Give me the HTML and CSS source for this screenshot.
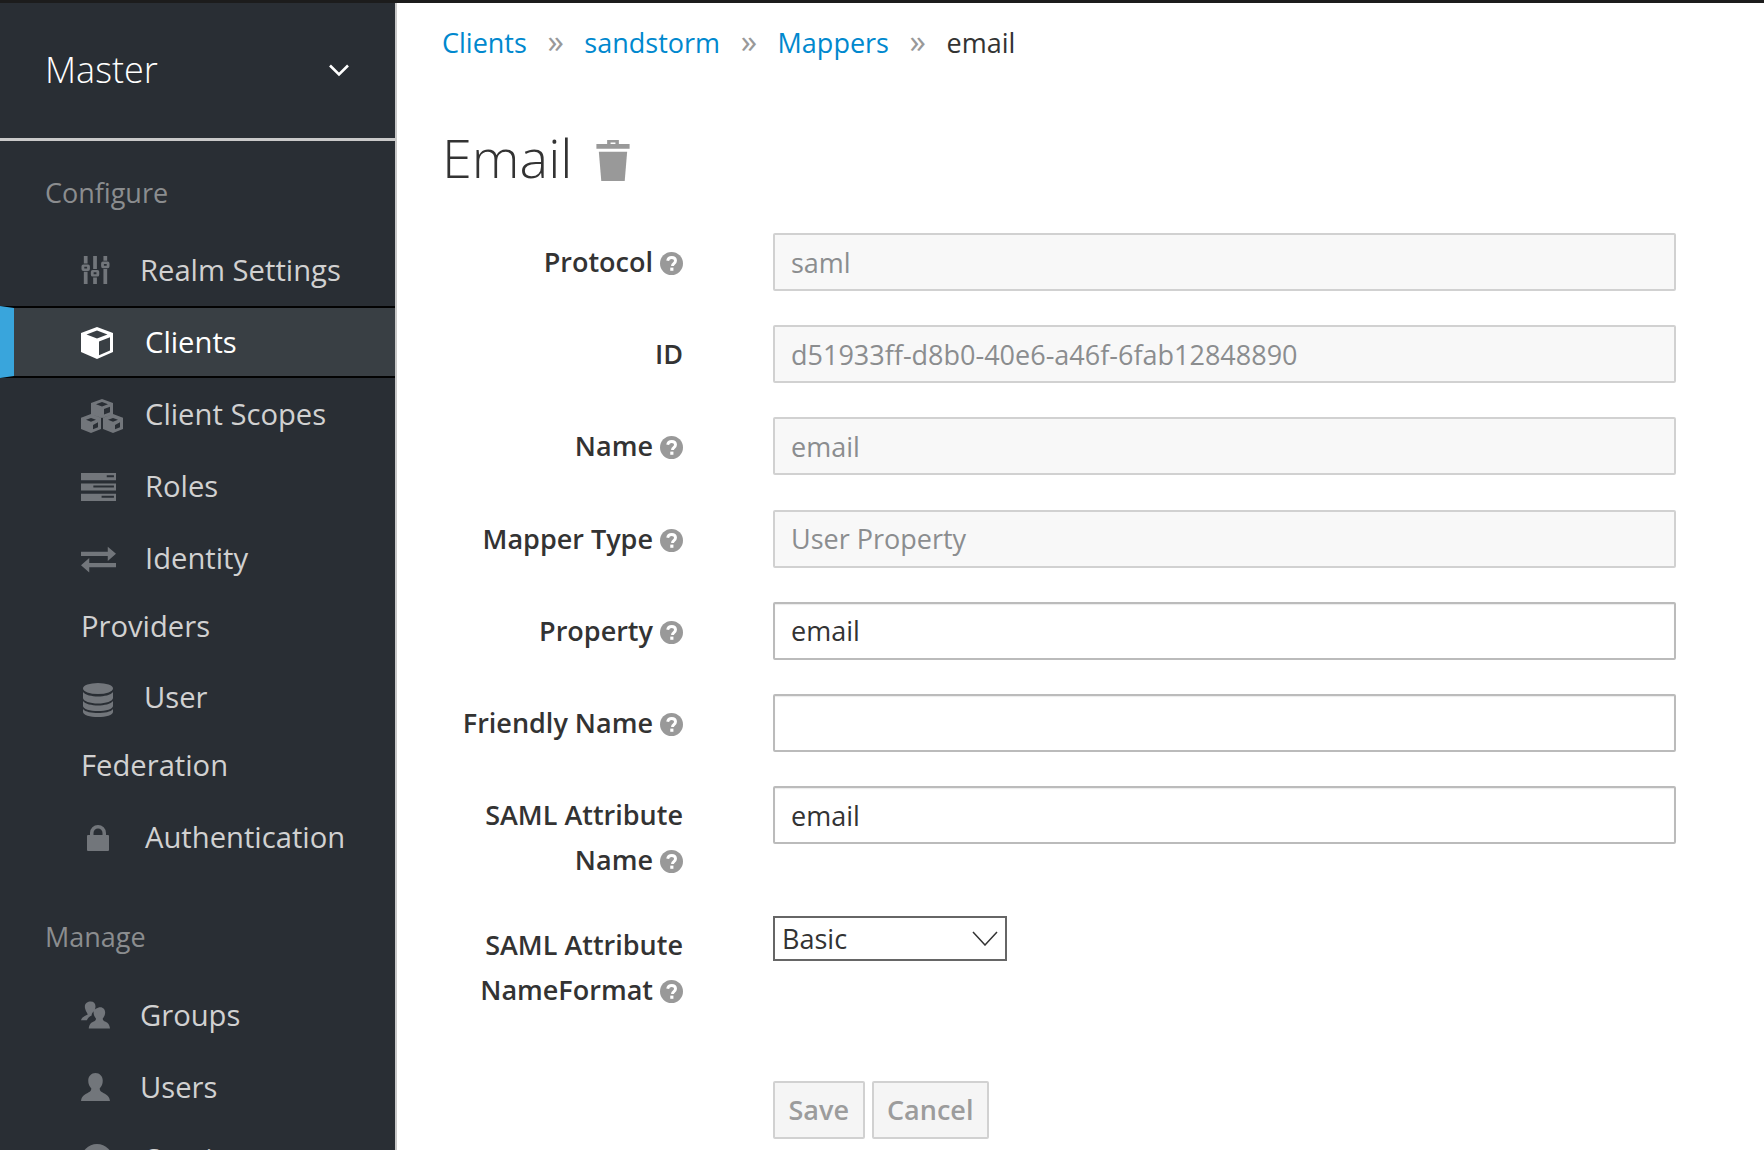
FILE: index.html
```html
<!DOCTYPE html>
<html lang="en">
<head>
  <meta charset="UTF-8">
  <title>Email mapper</title>
  <link rel="stylesheet" href="styles.css">
</head>
<body>
  <svg class="defs" width="0" height="0">
    <symbol id="help" viewBox="0 0 24 24">
      <circle cx="12" cy="12" r="12" fill="#999"/>
      <path d="M8 9.200c.4-2.200 2-3.400 4.200-3.400 2.300 0 4 1.300 4 3.400 0 3-3.200 2.900-3.200 5.300" fill="none" stroke="#fff" stroke-width="3"/>
      <rect x="10.700" y="16.300" width="3.300" height="3.300" fill="#fff"/>
    </symbol>
  </svg>

  <div class="topbar"></div>
  <div class="app">
    <aside class="sidebar">
      <div class="realm">
        <span>Master</span>
        <svg class="chevron" viewBox="0 0 22 14"><path d="M2 2.500 11 11.500 20 2.500" fill="none" stroke="#fff" stroke-width="2.600"/></svg>
      </div>

      <h2 class="nav-title">Configure</h2>
      <ul class="nav">
        <li><a href="#"><svg class="icon icon-narrow" viewBox="0 0 30 30"><path d="M2.500 0h4v8h-4zM12.500 0h4v14h-4zM23.500 0h4v5h-4zM2.500 17h4v13h-4zM12.500 23h4v7h-4zM23.500 14h4v16h-4z"/><path d="M2 9h5a2 2 0 0 1 2 2v3a2 2 0 0 1-2 2H2a2 2 0 0 1-2-2v-3a2 2 0 0 1 2-2zm1 2.500v2h3v-2zM12 15h5a2 2 0 0 1 2 2v3a2 2 0 0 1-2 2h-5a2 2 0 0 1-2-2v-3a2 2 0 0 1 2-2zm1 2.500v2h3v-2zM23 6h5a2 2 0 0 1 2 2v3a2 2 0 0 1-2 2h-5a2 2 0 0 1-2-2V8a2 2 0 0 1 2-2zm1 2.500v2h3v-2z" fill-rule="evenodd"/></svg>Realm Settings</a></li>
        <li class="active"><a href="#"><svg class="icon" viewBox="0 0 32 32"><path d="M16 0 32 6v19L16 32 0 25V6zM16 3.500 5.500 7.500 16 11.500 26.500 7.500zM18 14.500v13.800l11-4.800V10.300z" fill-rule="evenodd" fill="#fff"/></svg>Clients</a></li>
        <li><a href="#"><svg class="icon icon-cubes" viewBox="0 0 42 34"><path d="M21 0 32 4v11l-11 4-11-4V4zM21 3 15 5.200 21 7.500 27 5.200zM23 10v5.500l6-2.300V7.700zM10 15l10 3.800V30l-10 4-10-4V18.800zM10 19l-5 1.800 5 2 5-2zM12 26v4.300l5-2v-5zM32 15l10 3.800V30l-10 4-10-4V18.800zM32 19l-5 1.800 5 2 5-2zM34 26v4.300l5-2v-5z" fill-rule="evenodd"/></svg>Client Scopes</a></li>
        <li><a href="#"><svg class="icon icon-wide" viewBox="0 0 34 27"><path d="M0 0h34v7H0zm25 2v2h7V2zM0 10h34v7H0zm12 2v2h20v-2zM0 20h34v7H0zm20 2v2h12v-2z" fill-rule="evenodd"/></svg>Roles</a></li>
        <li><a href="#"><svg class="icon icon-wide" viewBox="0 0 34 26"><path d="M0 6h26V1l8 7-8 7v-5H0zM8 12v5h26v4H8v5l-8-7z"/></svg>Identity Providers</a></li>
        <li class="short"><a href="#"><svg class="icon icon-db" viewBox="0 0 30 34"><ellipse cx="15" cy="5.500" rx="15" ry="5.500"/><path d="M0 9c2 3 9 4.500 15 4.500S28 12 30 9v6c0 3-7 5.500-15 5.500S0 18 0 15zM0 18c2 3 9 4.500 15 4.500S28 21 30 18v5c0 3-7 5-15 5S0 26 0 23zM0 26c2 3 9 4 15 4s13-1 15-4v3c0 3-7 5-15 5S0 32 0 29z"/></svg>User Federation</a></li>
        <li><a href="#"><svg class="icon icon-lock" viewBox="0 0 22 27"><path d="M3 11V9a8 8 0 0 1 16 0v2h2a1 1 0 0 1 1 1v14a1 1 0 0 1-1 1H1a1 1 0 0 1-1-1V12a1 1 0 0 1 1-1zm3.500 0h9V9a4.500 4.500 0 0 0-9 0z" fill-rule="evenodd"/></svg>Authentication</a></li>
      </ul>

      <h2 class="nav-title nav-title-lower">Manage</h2>
      <ul class="nav">
        <li><a href="#"><svg class="icon icon-narrow" viewBox="0 0 30 28"><path d="M10 0c3 0 5 2 5 5 0 2-.500 3.500-2 5.500-1.500 1.500-2 3-2 4-2 1-3.500 2-5 5H0c.500-3 4-4.500 7-6-.500-1.500-1-2-2-4C4 7 4 6 4 5c0-3 3-5 6-5zM20 6c3 0 5 2.500 5 5.500 0 2.500-1 4.500-2.500 6 0 2 1 2.500 3 3.500 2 1 4 2.500 4.500 7H8c.500-4.500 2.500-6 4.500-7 2-1 3-1.500 3-3.500-1.500-1.500-2.500-3.500-2.500-6C13 8.500 17 6 20 6z"/></svg>Groups</a></li>
        <li><a href="#"><svg class="icon icon-narrow" viewBox="0 0 28 27"><path d="M14 0c4 0 7 3 7 7.500 0 3-1 5.500-3 7.500 0 2.500 2 3.500 4 4.500 3 1.500 5.500 3 6 7.500H0c.500-4.500 3-6 6-7.500 2-1 4-2 4-4.500C8 13 7 10.500 7 7.500 7 3 10 0 14 0z"/></svg>Users</a></li>
        <li><a href="#"><svg class="icon" viewBox="0 0 32 32"><circle cx="16" cy="16" r="16"/></svg>Sessions</a></li>
      </ul>
    </aside>

    <main class="content">
      <ol class="breadcrumb">
        <li><a href="#">Clients</a></li>
        <li><a href="#">sandstorm</a></li>
        <li><a href="#">Mappers</a></li>
        <li>email</li>
      </ol>

      <h1 class="page-title">Email
        <svg class="trash" viewBox="0 0 34 42"><path d="M11 0h12v4h11v5H0V4h11zM14.500 2.500V4h5V2.500z" fill-rule="evenodd"/><path d="M2.500 12h29L29 42H5z"/></svg>
      </h1>

      <form class="mapper-form">
        <div class="field">
          <label>Protocol <svg class="help"><use href="#help"/></svg></label>
          <input type="text" value="saml" readonly class="locked">
        </div>
        <div class="field">
          <label>ID</label>
          <input type="text" value="d51933ff-d8b0-40e6-a46f-6fab12848890" readonly class="locked">
        </div>
        <div class="field">
          <label>Name <svg class="help"><use href="#help"/></svg></label>
          <input type="text" value="email" readonly class="locked">
        </div>
        <div class="field">
          <label>Mapper Type <svg class="help"><use href="#help"/></svg></label>
          <input type="text" value="User Property" readonly class="locked">
        </div>
        <div class="field">
          <label>Property <svg class="help"><use href="#help"/></svg></label>
          <input type="text" value="email">
        </div>
        <div class="field">
          <label>Friendly Name <svg class="help"><use href="#help"/></svg></label>
          <input type="text">
        </div>
        <div class="field">
          <label>SAML Attribute Name <svg class="help"><use href="#help"/></svg></label>
          <input type="text" value="email">
        </div>
        <div class="field">
          <label>SAML Attribute NameFormat <svg class="help"><use href="#help"/></svg></label>
          <div class="select">
            <span>Basic</span>
            <svg viewBox="0 0 26 15"><path d="M1 1 13 14 25 1" fill="none" stroke="#333" stroke-width="1.500"/></svg>
          </div>
        </div>
        <div class="actions">
          <button type="button">Save</button>
          <button type="button">Cancel</button>
        </div>
      </form>
    </main>
  </div>
</body>
</html>
```

FILE: styles.css
```css
html, body {
  margin: 0;
  height: 100%;
  overflow: hidden;
}
body {
  font-family: "Open Sans", sans-serif;
  font-size: 27px;
  color: #333;
  background: #fff;
}
.defs {
  position: absolute;
}
.topbar {
  height: 3px;
  background: #1c1c1c;
}
.app {
  display: flex;
  height: 1147px;
  overflow: hidden;
}

/* sidebar */
.sidebar {
  flex: 0 0 395px;
  background: #292e34;
  border-right: 2px solid #c8c8c8;
}
.realm {
  display: flex;
  align-items: center;
  justify-content: space-between;
  box-sizing: border-box;
  height: 138px;
  padding: 0 46px 3px 45px;
  border-bottom: 3px solid #c9c9c9;
  color: #fff;
  font-size: 36px;
  font-weight: 300;
}
.chevron {
  width: 22px;
  height: 14px;
  margin: 2px -1px 0 0;
}
.nav-title {
  margin: 9px 0 0;
  padding-left: 45px;
  height: 84px;
  line-height: 86px;
  font-size: 27px;
  font-weight: 400;
  color: #8b8d8f;
}
.nav-title-lower {
  margin-top: 22px;
  line-height: 84px;
}
.nav {
  list-style: none;
  margin: 0;
  padding: 0;
}
.nav li {
  border-top: 2px solid transparent;
  border-bottom: 2px solid transparent;
  padding: 0 45px 0 81px;
  line-height: 68px;
  font-size: 29.200px;
}
.nav .short {
  line-height: 67.500px;
}
.nav a {
  color: #d1d1d1;
  text-decoration: none;
}
.nav .active {
  border-color: #030303;
  border-left: 14px solid #39a5dc;
  padding-left: 67px;
  background: #393f44;
}
.nav .active a {
  color: #fff;
}
.icon {
  display: inline-block;
  width: 32px;
  height: 32px;
  margin-right: 32px;
  vertical-align: -6px;
  fill: #72767b;
}
.icon-narrow {
  width: 29px;
  height: 28px;
  vertical-align: -3px;
  margin-right: 30px;
}
.icon-wide {
  width: 35px;
  height: 28px;
  vertical-align: -4px;
  margin-right: 29px;
}
.icon-cubes {
  width: 42px;
  height: 34px;
  vertical-align: -8px;
  margin-right: 22px;
}
.icon-db {
  width: 30px;
  height: 34px;
  margin: 0 31px 0 2px;
  vertical-align: -9px;
}
.icon-lock {
  width: 22px;
  height: 27px;
  margin: 0 36px 0 6px;
  vertical-align: -3px;
}

/* main */
.content {
  flex: 1;
  padding: 0 88px 0 45px;
}
.breadcrumb {
  display: flex;
  list-style: none;
  margin: 0;
  padding: 20px 0 0;
  line-height: 40px;
}
.breadcrumb a {
  color: #0088ce;
  text-decoration: none;
}
.breadcrumb li + li::before {
  content: "\00bb";
  display: inline-block;
  width: 57.500px;
  text-align: center;
  font-size: 33px;
  line-height: 30px;
  color: #999;
}
.page-title {
  display: flex;
  align-items: center;
  margin: 61px 0 0;
  height: 66px;
  font-size: 54px;
  font-weight: 300;
  color: #333;
}
.trash {
  width: 36px;
  height: 41px;
  margin: 7px 0 0 22px;
  fill: #999;
}
.mapper-form {
  margin-top: 43px;
}
.field {
  display: grid;
  grid-template-columns: 241px 1fr;
  column-gap: 90px;
  align-items: start;
  margin-bottom: 34.200px;
}
.field label {
  padding-top: 6px;
  line-height: 45px;
  text-align: right;
  font-weight: 600;
}
.help {
  width: 23px;
  height: 23px;
  vertical-align: -3px;
}
.field input {
  box-sizing: border-box;
  width: 100%;
  height: 58px;
  padding: 0 16px;
  border: 2px solid #bbb;
  border-radius: 2px;
  outline: none;
  font: inherit;
  color: #333;
  background: #fff;
  box-shadow: inset 0 1px 1px rgba(0,0,0,0.08);
}
.field input.locked {
  border-color: #d1d1d1;
  color: #8b8d8f;
  background: #f8f8f8;
  box-shadow: none;
}
.select {
  display: flex;
  align-items: center;
  justify-content: space-between;
  box-sizing: border-box;
  width: 234px;
  height: 45px;
  padding: 0 7px;
  border: 2px solid #666;
}
.select svg {
  width: 26px;
  height: 15px;
}
.actions {
  padding: 34px 0 0 331px;
  display: flex;
  gap: 7px;
}
.actions button {
  box-sizing: border-box;
  height: 58px;
  padding: 0 13.500px;
  border: 2px solid #d1d1d1;
  border-radius: 2px;
  font: inherit;
  font-weight: 600;
  color: #9c9c9c;
  background: #f5f5f5;
}
```
